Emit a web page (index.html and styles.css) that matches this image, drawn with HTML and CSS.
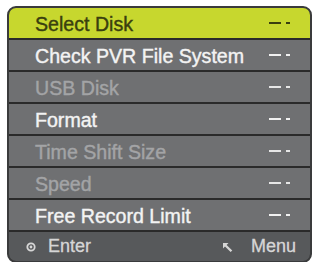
FILE: index.html
```html
<!DOCTYPE html>
<html>
<head>
<meta charset="utf-8">
<link rel="stylesheet" href="styles.css">
</head>
<body>
<div class="panel">
  <div class="row sel"><span class="label">Select Disk</span><span class="dash"><i class="bar"></i><i class="dot"></i></span></div>
  <div class="row"><span class="label">Check PVR File System</span><span class="dash"><i class="bar"></i><i class="dot"></i></span></div>
  <div class="row dis"><span class="label">USB Disk</span><span class="dash"><i class="bar"></i><i class="dot"></i></span></div>
  <div class="row"><span class="label">Format</span><span class="dash"><i class="bar"></i><i class="dot"></i></span></div>
  <div class="row dis"><span class="label">Time Shift Size</span><span class="dash"><i class="bar"></i><i class="dot"></i></span></div>
  <div class="row dis"><span class="label">Speed</span><span class="dash"><i class="bar"></i><i class="dot"></i></span></div>
  <div class="row"><span class="label">Free Record Limit</span><span class="dash"><i class="bar"></i><i class="dot"></i></span></div>
  <div class="footer">
    <span class="key"><svg class="ok" width="10" height="10" viewBox="0 0 10 10"><circle cx="5" cy="5" r="3.7" fill="none" stroke="#d6d6d6" stroke-width="1.8"/><circle cx="5" cy="5" r="1.4" fill="#d6d6d6"/></svg>Enter</span>
    <span class="key"><svg class="back" width="12" height="10" viewBox="0 0 12 10"><path d="M1 1 L6.5 1 L4.6 2.9 L10.3 8.5 L8.6 10 L3 4.4 L1 6.4 Z" fill="#d6d6d6"/></svg>Menu</span>
  </div>
</div>
</body>
</html>
```
FILE: styles.css
```css
html, body {
  margin: 0;
  padding: 0;
  background: #ffffff;
}
body {
  padding: 6px 0 0 7px;
  font-family: "Liberation Sans", Arial, sans-serif;
}
.panel {
  width: 301px;
  border: 2px solid #3a3b3c;
  border-radius: 9px;
  overflow: hidden;
  background: #2a2a2a;
  display: flex;
  flex-direction: column;
  gap: 2px;
}
.row {
  height: 30px;
  background: #6f7072;
  display: flex;
  align-items: center;
  justify-content: space-between;
  padding: 0 20px 0 26px;
  color: #f3f3f3;
  font-size: 19.6px;
  -webkit-text-stroke: 0.4px currentColor;
}
.row .label {
  padding-top: 2px;
}
.row.sel {
  background: #c7d72e;
  color: #3a3f0f;
}
.row.dis {
  color: #a3a4a6;
}
.dash {
  display: flex;
  align-items: center;
  gap: 5px;
}
.dash i {
  display: block;
  height: 2px;
  background: #f0f0f0;
}
.dash .bar { width: 12px; }
.dash .dot { width: 4px; }
.sel .dash i { background: #3a3f0f; }
.dis .dash i { background: #e6e6e6; }
.footer {
  height: 29px;
  background: #57595b;
  display: flex;
  align-items: center;
  justify-content: space-between;
  padding: 0 14px 0 17px;
  color: #d6d6d6;
  font-size: 18px;
  -webkit-text-stroke: 0.3px currentColor;
}
.key {
  display: flex;
  align-items: center;
}
.ok {
  margin-right: 12px;
}
.back {
  margin-right: 17px;
}
```
